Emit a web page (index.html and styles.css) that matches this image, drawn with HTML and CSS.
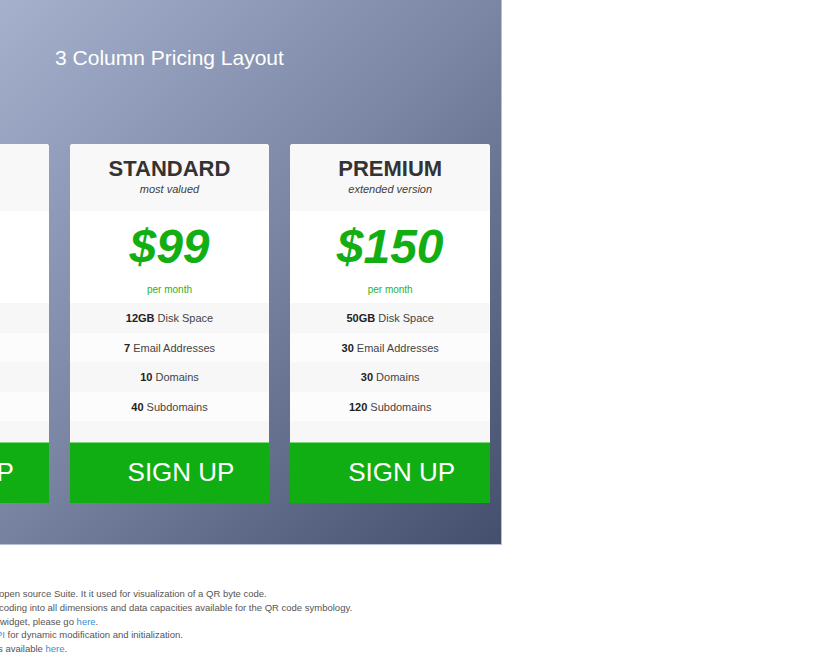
FILE: index.html
```html
<!DOCTYPE html>
<html>
<head>
<meta charset="utf-8">
<link rel="stylesheet" href="styles.css">
</head>
<body>
<div class="page">
  <section class="panel">
    <h1 class="title">3 Column Pricing Layout</h1>
    <div class="cards">
      <div class="card">
        <div class="card-head"><div class="plan">BASIC</div><div class="tag">starter</div></div>
        <div class="price"><div class="amount">$49</div><div class="per">per month</div></div>
        <ul class="features">
          <li><b>5GB</b> Disk</li>
          <li><b>3</b> Emails</li>
          <li><b>5</b> Domains</li>
          <li><b>20</b> Subs</li>
          <li class="filler"></li>
        </ul>
        <a class="signup" href="#">SIGN UP</a>
      </div>
      <div class="card">
        <div class="card-head"><div class="plan">STANDARD</div><div class="tag">most valued</div></div>
        <div class="price"><div class="amount">$99</div><div class="per">per month</div></div>
        <ul class="features">
          <li><b>12GB</b> Disk Space</li>
          <li><b>7</b> Email Addresses</li>
          <li><b>10</b> Domains</li>
          <li><b>40</b> Subdomains</li>
          <li class="filler"></li>
        </ul>
        <a class="signup" href="#">SIGN UP</a>
      </div>
      <div class="card">
        <div class="card-head"><div class="plan">PREMIUM</div><div class="tag">extended version</div></div>
        <div class="price"><div class="amount">$150</div><div class="per">per month</div></div>
        <ul class="features">
          <li><b>50GB</b> Disk Space</li>
          <li><b>30</b> Email Addresses</li>
          <li><b>30</b> Domains</li>
          <li><b>120</b> Subdomains</li>
          <li class="filler"></li>
        </ul>
        <a class="signup" href="#">SIGN UP</a>
      </div>
    </div>
  </section>
</div>
<div class="notes">
  <p class="line cut1">open source Suite. It it used for visualization of a QR byte code.</p>
  <p class="line cut1">coding into all dimensions and data capacities available for the QR code symbology.</p>
  <p class="line">widget, please go <a href="#">here</a>.</p>
  <p class="line cut3"><a href="#">PI</a> for dynamic modification and initialization.</p>
  <p class="line cut2">s available <a href="#">here</a>.</p>
</div>
</body>
</html>
```

FILE: styles.css
```css
html, body {
  margin: 0;
  padding: 0;
  background: #ffffff;
  overflow: hidden;
  font-family: "Liberation Sans", Arial, sans-serif;
}

.page {
  margin-left: -161px;
  width: 663px;
}

.panel {
  box-sizing: border-box;
  width: 663px;
  height: 545px;
  padding: 0 11px 0 10px;
  background: linear-gradient(135deg, #aab6d2 0%, #a5b1cd 13%, #7a86a4 55%, #444e6d 100%);
  border-right: 1px solid #b9c0d6;
  border-bottom: 1px solid #b9c0d6;
}

.title {
  margin: 0;
  padding-top: 45px;
  height: 101px;
  box-sizing: border-box;
  text-align: center;
  color: #ffffff;
  font-weight: normal;
  font-size: 21px;
  line-height: 25px;
}

.cards {
  display: flex;
  gap: 21px;
  margin-top: 43px;
}

.card {
  width: 200px;
  display: flex;
  flex-direction: column;
  border-radius: 3px 3px 0 0;
  overflow: hidden;
  background: #ffffff;
}

.card-head {
  height: 67px;
  box-sizing: border-box;
  padding-top: 12px;
  background: #f8f8f8;
  text-align: center;
}

.plan {
  font-size: 22px;
  line-height: 26px;
  font-weight: bold;
  color: #333333;
}

.tag {
  font-size: 11px;
  line-height: 15px;
  font-style: italic;
  color: #3d3d3d;
}

.price {
  height: 92px;
  box-sizing: border-box;
  padding-top: 8px;
  background: #ffffff;
  text-align: center;
}

.amount {
  font-size: 48px;
  line-height: 56px;
  font-weight: bold;
  font-style: italic;
  color: #12ae12;
}

.per {
  margin-top: 8px;
  font-size: 10px;
  line-height: 14px;
  color: #27b327;
}

.features {
  list-style: none;
  margin: 0;
  padding: 0;
}

.features li {
  height: 29.5px;
  line-height: 31px;
  text-align: center;
  font-size: 11px;
  color: #444444;
  background: #f7f7f7;
}

.features li:nth-child(even) {
  background: #fcfcfc;
}

.features li b {
  color: #222222;
}

.features li.filler {
  height: 20.5px;
  background: #f7f7f7;
}

.signup {
  display: block;
  height: 61px;
  box-sizing: border-box;
  padding-left: 23px;
  border-top: 1px solid #7fd67f;
  background: #10ae13;
  color: #ffffff;
  text-align: center;
  text-decoration: none;
  font-size: 26px;
  line-height: 58px;
}

.notes {
  margin-top: 42px;
  font-size: 9.5px;
  line-height: 13.75px;
  color: #555555;
}

.line {
  margin: 0;
  white-space: nowrap;
}

.line a {
  color: #3b8ed0;
  text-decoration: none;
}

.cut1 {
  margin-left: -1px;
}

.cut2 {
  margin-left: -2px;
}

.cut3 {
  margin-left: -4px;
}
```
